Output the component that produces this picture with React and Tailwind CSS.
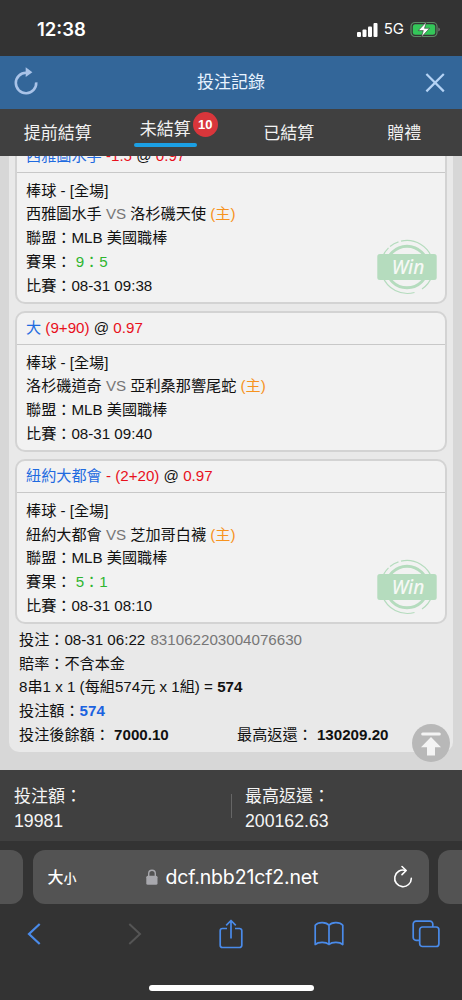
import React, { useState } from "react";

const tabs = [
  { label: "提前結算" },
  { label: "未結算", count: 10 },
  { label: "已結算" },
  { label: "贈禮" },
];

const bets = [
  {
    pick: "西雅圖水手",
    line: "-1.5",
    odds: "0.97",
    home: "西雅圖水手",
    away: "洛杉磯天使",
    score: "9：5",
    time: "08-31 09:38",
  },
  {
    pick: "大",
    line: "(9+90)",
    odds: "0.97",
    home: "洛杉磯道奇",
    away: "亞利桑那響尾蛇",
    time: "08-31 09:40",
  },
  {
    pick: "紐約大都會",
    line: "- (2+20)",
    odds: "0.97",
    home: "紐約大都會",
    away: "芝加哥白襪",
    score: "5：1",
    time: "08-31 08:10",
  },
];

const StatusBar = () => (
  <div className="flex h-14 shrink-0 items-center justify-between bg-[#333] pl-[37px] pr-[21px] pt-[3px] text-white">
    <span className="font-['Inter',sans-serif] text-[18.5px] font-semibold">12:38</span>
    <div className="flex items-center">
      <svg width="21" height="14" viewBox="0 0 21 14" fill="#fff">
        <rect x="0" y="9" width="4" height="5" rx="1" />
        <rect x="5.5" y="6.5" width="4" height="7.5" rx="1" />
        <rect x="11" y="3.5" width="4" height="10.5" rx="1" />
        <rect x="16.5" y="0" width="4" height="14" rx="1" />
      </svg>
      <span className="ml-[6px] font-['Inter',sans-serif] text-[15px]">5G</span>
      <svg className="ml-[6px]" width="31" height="17" viewBox="0 0 31 17">
        <rect x="1" y="1.5" width="26" height="14" rx="4" fill="none" stroke="#5d8a66" strokeWidth="1.2" />
        <rect x="2.8" y="3.3" width="22.4" height="10.4" rx="2.5" fill="#34c759" />
        <path d="M28.5 6.5v4a2.3 2.3 0 0 0 0-4z" fill="#8a8a8a" />
        <path
          d="M16.5.8 8.3 9.6h5l-2 6.6 8.2-8.9h-5z"
          fill="#fff"
          stroke="#333"
          strokeWidth="0.6"
        />
      </svg>
    </div>
  </div>
);

const Header = () => (
  <header className="flex h-[53px] shrink-0 items-center justify-between bg-[#336699] pl-[14px] pr-[17px]">
    <svg className="-mt-[4px]" width="25" height="28" viewBox="0 0 25 28" fill="none">
      <path d="M12.3 5.8A10.2 10.2 0 1 0 22.2 15.3" stroke="#a9c3e8" strokeWidth="2.6" />
      <path d="M11.7 0.3 18.4 5.2 11.7 10z" fill="#a9c3e8" />
    </svg>
    <h1 className="-ml-[2px] text-[17px] text-[#e8f3ff]">投注記錄</h1>
    <svg width="20" height="20" viewBox="0 0 20 20" stroke="#b5d3f5" strokeWidth="2.2">
      <path d="M1.4 1 18.8 18.4M18.8 1 1.4 18.4" />
    </svg>
  </header>
);

const Tabs = () => {
  const [active, setActive] = useState(1);

  return (
    <nav className="flex h-[47px] shrink-0 bg-[#404040] text-[17px] text-[#f2f2f2]">
      {tabs.map((tab, index) => (
        <button
          key={tab.label}
          onClick={() => setActive(index)}
          className="flex w-1/4 flex-col items-center pt-[12px] leading-[26px]"
        >
          {index === active ? (
            <span className="relative -mt-[4px] mr-[16px] flex w-[63px] flex-col items-center whitespace-nowrap">
              {tab.label}
              <span className="h-[4px] w-full rounded-full bg-[#1b9fe4]" />
              {tab.count && (
                <span className="absolute -right-[21px] -top-[5px] flex size-[25px] items-center justify-center rounded-full bg-[#d9363b] text-[13px] font-bold text-white">
                  {tab.count}
                </span>
              )}
            </span>
          ) : (
            <span>{tab.label}</span>
          )}
        </button>
      ))}
    </nav>
  );
};

const WinStamp = () => (
  <svg
    className="absolute bottom-[7.5px] right-[8.5px]"
    width="60"
    height="56"
    viewBox="0 0 60 56"
  >
    <g fill="none" stroke="#b5dcbe">
      <circle cx="30" cy="28" r="20.8" strokeWidth="3" />
      <path d="M24 2.1A26.5 26.5 0 0 1 55.5 21M13 7.5A26.5 26.5 0 0 1 21.5 2.9M4.5 21A26.5 26.5 0 0 1 11.5 8.9M5.5 37A26.5 26.5 0 0 0 37.5 53.5M45 50A26.5 26.5 0 0 0 55 37" strokeWidth="1.2" />
    </g>
    <rect x="0.3" y="15" width="59.4" height="26" rx="2.5" fill="#b5dcbe" />
    <text
      x="31"
      y="34.7"
      textAnchor="middle"
      fill="#f5f8f5"
      fontFamily="Noto Sans, Open Sans, sans-serif"
      fontSize="19"
      fontStyle="italic"
      fontWeight="500"
    >
      Win
    </text>
  </svg>
);

const BetCard = ({ bet }) => (
  <div className="relative rounded-[10px] border-2 border-[#d3d3d3] bg-[#f2f2f2]">
    <div className="h-[32px] border-b border-[#c8c8c8] pl-[9px] leading-[30px]">
      <span className="text-[#1f6be0]">{bet.pick}</span>{" "}
      <span className="text-[#e8101c]">{bet.line}</span> @{" "}
      <span className="text-[#e8101c]">{bet.odds}</span>
    </div>
    <div className="pb-[4.8px] pl-[9px] pt-[6.2px]">
      <p>棒球 - [全場]</p>
      <p>
        {bet.home} <span className="text-[#777]">VS</span> {bet.away}{" "}
        <span className="text-[#f7931e]">(主)</span>
      </p>
      <p>聯盟：MLB 美國職棒</p>
      {bet.score && (
        <p>
          賽果： <span className="text-[#2fb52f]">{bet.score}</span>
        </p>
      )}
      <p>比賽：{bet.time}</p>
    </div>
    {bet.score && <WinStamp />}
  </div>
);

const BetList = () => (
  <main className="relative h-[614px] shrink-0 overflow-hidden bg-[#d7d7d7] px-[9px] text-[15.15px] leading-[23.7px] text-[#111]">
    <div className="-mt-[24px] rounded-b-[10px] bg-[#e9e9e9] px-[6px] pb-[5.5px] pt-[6.5px]">
      <div className="flex flex-col gap-[6.5px]">
        {bets.map((bet) => (
          <BetCard key={bet.home} bet={bet} />
        ))}
      </div>
      <div className="pl-1 pt-[3.5px]">
        <p>
          投注：08-31 06:22 <span className="ml-px text-[#777]">831062203004076630</span>
        </p>
        <p>賠率：不含本金</p>
        <p>
          8串1 x 1 (每組574元 x 1組) = <b>574</b>
        </p>
        <p>
          投注額：<b className="text-[#1a62e0]">574</b>
        </p>
        <div className="flex">
          <p className="w-[218px]">
            投注後餘額： <b>7000.10</b>
          </p>
          <p>
            最高返還： <b>130209.20</b>
          </p>
        </div>
      </div>
    </div>
    {/* Back to top */}
    <button className="absolute bottom-[8px] right-[12px]">
      <svg width="38" height="38" viewBox="0 0 38 38">
        <circle cx="19" cy="19" r="19" fill="#b8b8b8" />
        <g fill="#f4f4f4">
          <rect x="9.2" y="8.5" width="19.6" height="3" rx="1.5" />
          <path d="M19 13 29 23.2H23V31.5H15V23.2H9z" />
        </g>
      </svg>
    </button>
  </main>
);

const Summary = () => (
  <div className="flex h-[71px] shrink-0 items-center bg-[#404040] text-[17px] leading-[24px] text-[#f5f5f5]">
    <div className="w-[231px] pl-[14px] pt-[6px]">
      <p>投注額：</p>
      <p className="text-[17.7px]">19981</p>
    </div>
    <div className="h-[24px] w-px bg-[#666]" />
    <div className="pl-[13px] pt-[6px]">
      <p>最高返還：</p>
      <p className="text-[17.7px]">200162.63</p>
    </div>
  </div>
);

const BrowserBar = () => (
  <footer className="flex flex-1 flex-col bg-[#333] pt-[9px]">
    <div className="flex h-[54px] justify-between">
      <div className="w-[23px] rounded-r-[12px] bg-[#535353]" />
      <div className="flex w-[396px] items-center rounded-[12px] bg-[#535353] text-white">
        <span className="w-[113px] pl-[15px] pt-[2px] font-medium">
          <span className="text-[16px]">大</span>
          <span className="text-[13px]">小</span>
        </span>
        <svg width="12" height="16" viewBox="0 0 12 16">
          <path d="M2.7 8V4.6a3.3 3.3 0 0 1 6.6 0V8" fill="none" stroke="#a8a8ad" strokeWidth="1.4" />
          <rect x="0.3" y="6.8" width="11.2" height="9" rx="1.5" fill="#a8a8ad" />
        </svg>
        <span className="ml-[8px] flex-1 pt-[2px] font-['Inter',sans-serif] text-[19.5px] tracking-[-0.15px]">
          dcf.nbb21cf2.net
        </span>
        <svg
          className="mr-[16px]"
          width="20"
          height="24"
          viewBox="0 0 20 24"
          fill="none"
          stroke="#fff"
          strokeWidth="1.6"
          strokeLinecap="round"
          strokeLinejoin="round"
        >
          <path d="M12.3 5.4A8.3 8.3 0 1 0 18.3 13.4" />
          <path d="M9 1.5 13.2 5.5 9 9.6" />
        </svg>
      </div>
      <div className="w-[24px] rounded-l-[12px] bg-[#535353]" />
    </div>
    <div className="mt-[12.5px] flex h-[34px] items-center pl-[27px] text-[#4a8bea]">
      <svg width="14" height="22" viewBox="0 0 14 22" fill="none" stroke="currentColor" strokeWidth="2.2">
        <path d="M12.7 1 2 11l10.7 10" />
      </svg>
      <svg className="ml-[87px]" width="14" height="22" viewBox="0 0 14 22" fill="none" stroke="#555" strokeWidth="2">
        <path d="M1.3 1 12 11 1.3 21" />
      </svg>
      <svg className="ml-[77px]" width="24" height="30" viewBox="0 0 24 30" fill="none" stroke="currentColor" strokeWidth="1.7" strokeLinejoin="round">
        <path d="M8 9.5H3.5A2.3 2.3 0 0 0 1.2 11.8V26.2A2.3 2.3 0 0 0 3.5 28.5h17a2.3 2.3 0 0 0 2.3-2.3V11.8a2.3 2.3 0 0 0-2.3-2.3H16" />
        <path d="M12 19.5V1.8M7.2 6.3 12 1.5l4.8 4.8" />
      </svg>
      <svg className="ml-[71px]" width="30" height="25" viewBox="0 0 30 25" fill="none" stroke="currentColor" strokeWidth="1.7" strokeLinejoin="round">
        <path d="M15 4.2C12.5 1 4.5.3 1.2 4.2V23.5C4.5 20.5 12 20.7 15 23.5 18 20.7 25.5 20.5 28.8 23.5V4.2C25.5.3 17.5 1 15 4.2zV23.5" />
      </svg>
      <svg className="ml-[68px]" width="28" height="28" viewBox="0 0 28 28" fill="none" stroke="currentColor" strokeWidth="1.7">
        <path d="M7.5 20.3H4A2.8 2.8 0 0 1 1.2 17.5V4A2.8 2.8 0 0 1 4 1.2H18A2.8 2.8 0 0 1 20.8 4V7" />
        <rect x="7.7" y="7" width="19.2" height="19.5" rx="2.8" />
      </svg>
    </div>
    <div className="mx-auto mt-[34.5px] h-[6px] w-[165px] rounded-full bg-white" />
  </footer>
);

const App = () => {
  return (
    <div className="flex h-screen w-full flex-col overflow-hidden bg-[#333] font-['Liberation_Sans','Noto_Sans_CJK_TC',sans-serif]">
      <StatusBar />
      <Header />
      <Tabs />
      <BetList />
      <Summary />
      <BrowserBar />
    </div>
  );
};

export default App;
